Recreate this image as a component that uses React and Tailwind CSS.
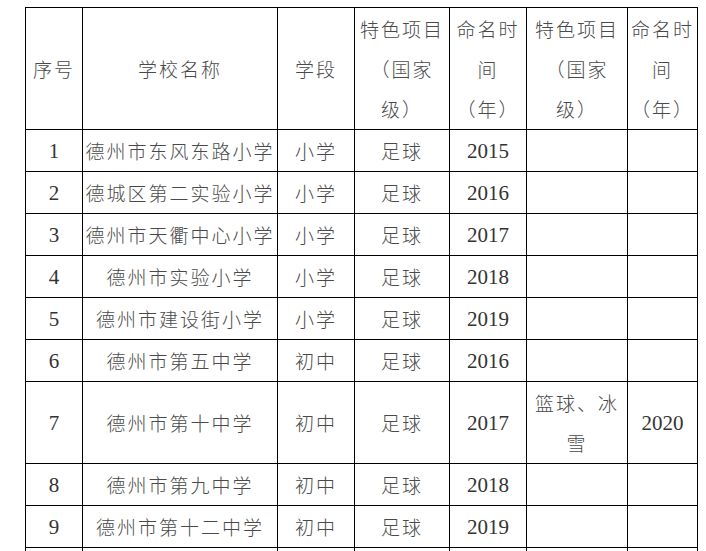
import React from 'react';

const rows = [
  { no: '1', name: '德州市东风东路小学', stage: '小学', sport: '足球', year: '2015' },
  { no: '2', name: '德城区第二实验小学', stage: '小学', sport: '足球', year: '2016' },
  { no: '3', name: '德州市天衢中心小学', stage: '小学', sport: '足球', year: '2017' },
  { no: '4', name: '德州市实验小学', stage: '小学', sport: '足球', year: '2018' },
  { no: '5', name: '德州市建设街小学', stage: '小学', sport: '足球', year: '2019' },
  { no: '6', name: '德州市第五中学', stage: '初中', sport: '足球', year: '2016' },
  { no: '7', name: '德州市第十中学', stage: '初中', sport: '足球', year: '2017', sport2: ['篮球、冰', '雪'], year2: '2020', tall: true },
  { no: '8', name: '德州市第九中学', stage: '初中', sport: '足球', year: '2018' },
  { no: '9', name: '德州市第十二中学', stage: '初中', sport: '足球', year: '2019' },
  // next row only shows its top border in the frame
  { no: '', name: '', stage: '', sport: '', year: '' },
];

const zh = "font-['Noto_Sans_CJK_SC',sans-serif] font-light text-[19px] tracking-[2px] text-[#4a4a4a]";
const num = "font-['Liberation_Serif',serif] font-normal text-[21px] text-[#333]";

const Cell = ({ children, className = '' }) => (
  <div className={`bg-white flex flex-col items-center justify-center text-center leading-[40px] whitespace-nowrap ${className}`}>
    {children}
  </div>
);

const Lines = ({ lines }) => lines.map((l, i) => <span key={i}>{l}</span>);

export default function App() {
  return (
    <div className="h-[551px] overflow-hidden bg-white pt-[7px] pl-[25px]">
      <div className="grid w-max grid-cols-[56px_194px_76px_94px_76px_100px_69px] gap-px bg-black p-px">
        {/* header */}
        <Cell className={`${zh} h-[121px]`}>序号</Cell>
        <Cell className={zh}>学校名称</Cell>
        <Cell className={zh}>学段</Cell>
        <Cell className={zh}><Lines lines={['特色项目', '（国家', '级）']} /></Cell>
        <Cell className={zh}><Lines lines={['命名时', '间', '（年）']} /></Cell>
        <Cell className={zh}><Lines lines={['特色项目', '（国家', '级）']} /></Cell>
        <Cell className={zh}><Lines lines={['命名时', '间', '（年）']} /></Cell>

        {rows.map((r, i) => (
          <React.Fragment key={i}>
            <Cell className={`${num} ${r.tall ? 'h-[81px]' : 'h-[41px]'}`}>{r.no}</Cell>
            <Cell className={zh}>{r.name}</Cell>
            <Cell className={zh}>{r.stage}</Cell>
            <Cell className={zh}>{r.sport}</Cell>
            <Cell className={num}>{r.year}</Cell>
            <Cell className={zh}>{r.sport2 ? <Lines lines={r.sport2} /> : null}</Cell>
            <Cell className={num}>{r.year2 || ''}</Cell>
          </React.Fragment>
        ))}
      </div>
    </div>
  );
}
